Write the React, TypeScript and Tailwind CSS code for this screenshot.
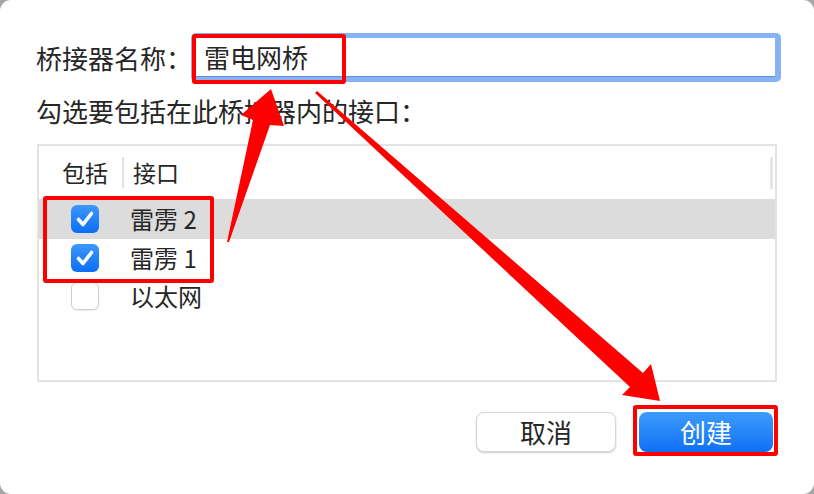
import React from "react";

const font = { fontFamily: '"Noto Sans CJK SC", "Noto Sans", sans-serif' };

function Checkbox({ checked }: { checked: boolean }) {
  if (checked) {
    return (
      <svg width="28" height="28" viewBox="0 0 28 28" className="shrink-0">
        <defs>
          <linearGradient id="cbg" x1="0" y1="0" x2="0" y2="1">
            <stop offset="0" stopColor="#3d97fb" />
            <stop offset="1" stopColor="#0b6ef4" />
          </linearGradient>
        </defs>
        <rect x="0" y="0" width="28" height="28" rx="6" fill="url(#cbg)" />
        <path d="M7.5 14.5 L12 19.5 L20.5 8.5" fill="none" stroke="#ffffff" strokeWidth="3.6" strokeLinecap="round" strokeLinejoin="round" />
      </svg>
    );
  }
  return (
    <div className="w-[28px] h-[28px] shrink-0 rounded-[6px] bg-white border border-[#cfcfcf] shadow-[0_1px_1px_rgba(0,0,0,0.08)]" />
  );
}

function Row({ label, checked, selected, h }: { label: string; checked: boolean; selected?: boolean; h: string }) {
  return (
    <div className={`flex items-center ${h} ${selected ? "bg-[#dcdcdc]" : ""}`}>
      <div className="w-[91px] flex justify-center">
        <Checkbox checked={checked} />
      </div>
      <span className="text-[24px] leading-none text-[#262626] whitespace-nowrap">{label}</span>
    </div>
  );
}

export default function App() {
  return (
    <div className="w-[814px] h-[494px] bg-[#a6a6a6]" style={font}>
      <div className="relative w-full h-full bg-white rounded-[11px] pt-[33px] pl-[36px] pr-[33px]">
        {/* name row */}
        <div className="flex items-center h-[49px]">
          <span className="w-[155px] shrink-0 text-[26px] leading-none text-[#262626] whitespace-nowrap">桥接器名称：</span>
          <div className="flex-1 h-[49px] rounded-[5px] bg-[#86b2f6] p-[5px] pr-[6px]">
            <div className="h-full bg-white border-b border-[#5f8fd8] flex items-center pl-[8px]">
              <span className="text-[26px] leading-none text-[#262626] whitespace-nowrap">雷电网桥</span>
            </div>
          </div>
        </div>

        <div className="mt-[13px] text-[26px] leading-[31px] text-[#262626] whitespace-nowrap">勾选要包括在此桥接器内的接口：</div>

        {/* table */}
        <div className="mt-[18px] ml-[1px] w-[740px] h-[238px] border-2 border-[#e3e3e3]">
          <div className="flex items-center h-[53px]">
            <div className="w-[83px] flex items-center justify-end pr-[14px]">
              <span className="text-[23px] leading-none text-[#262626] whitespace-nowrap">包括</span>
            </div>
            <div className="w-[2px] h-[31px] bg-[#e2e2e2]" />
            <span className="ml-[9px] text-[23px] leading-none text-[#262626] whitespace-nowrap">接口</span>
            <div className="flex-1" />
            <div className="w-[3px] h-[32px] bg-[#e6e6e6] mr-[2px]" />
          </div>
          <Row label="雷雳 2" checked selected h="h-[40px]" />
          <Row label="雷雳 1" checked h="h-[38px]" />
          <Row label="以太网" checked={false} h="h-[38px]" />
        </div>

        {/* buttons */}
        <div className="mt-[30px] flex justify-end pr-[8px] gap-[23px]">
          <button className="w-[140px] h-[40px] rounded-[8px] bg-white border border-[#d6d6d6] shadow-[0_1px_2px_rgba(0,0,0,0.2)] text-[26px] leading-none text-[#262626] flex items-center justify-center">
            取消
          </button>
          <button className="w-[134px] h-[40px] rounded-[8px] bg-gradient-to-b from-[#3d9bfc] to-[#0f6ff4] text-[26px] leading-none text-white flex items-center justify-center">
            创建
          </button>
        </div>

        {/* annotations */}
        <div className="absolute left-[192px] top-[34px] w-[154px] h-[50px] border-4 border-[#ff0000] rounded-[3px]" />
        <div className="absolute left-[43px] top-[196px] w-[171px] h-[87px] border-4 border-[#ff0000] rounded-[3px]" />
        <div className="absolute left-[633px] top-[405px] w-[145px] h-[51px] border-4 border-[#ff0000] rounded-[3px]" />
        <svg className="absolute left-0 top-0 pointer-events-none" width="814" height="494" viewBox="0 0 814 494">
          <polygon
            fill="#ff0000"
            points="227,242 229,242 270,125 284,126 271,89 241,115 253,120"
          />
          <polygon
            fill="#ff0000"
            points="315,93 317,91 643,373 651,364 660,401 622,395 630,387"
          />
        </svg>
      </div>
    </div>
  );
}
